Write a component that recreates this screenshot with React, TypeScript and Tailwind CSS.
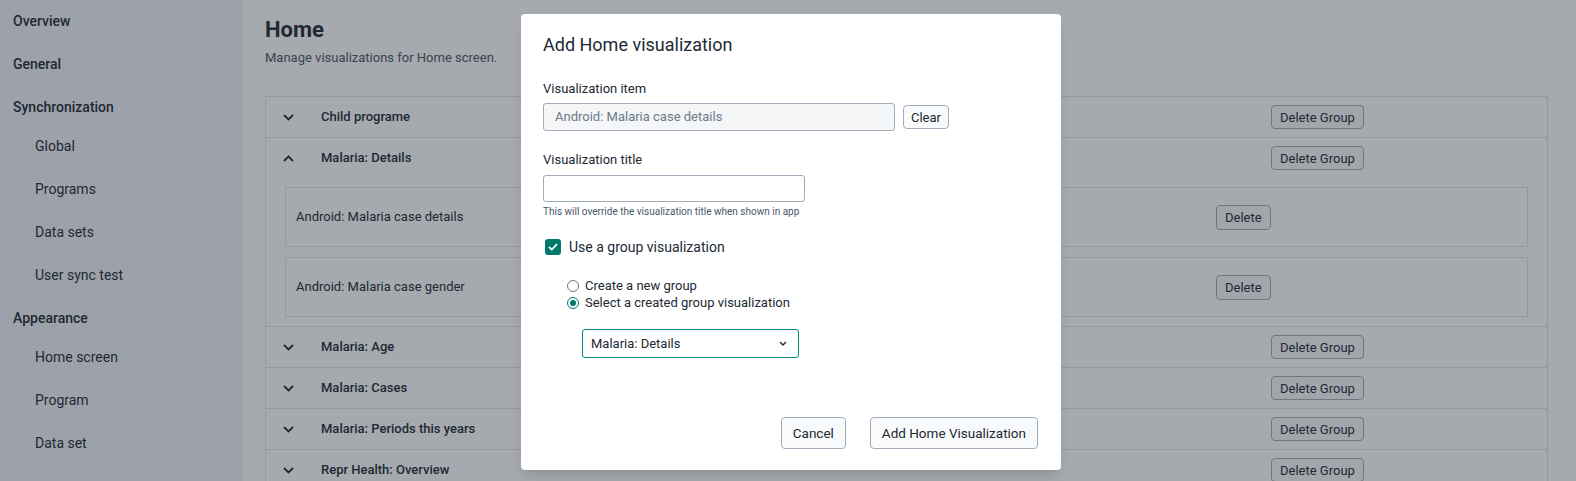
import React from "react"

interface Group {
  name: string
  open?: boolean
  items?: string[]
}

const groups: Group[] = [
  { name: "Child programe" },
  {
    name: "Malaria: Details",
    open: true,
    items: ["Android: Malaria case details", "Android: Malaria case gender"],
  },
  { name: "Malaria: Age" },
  { name: "Malaria: Cases" },
  { name: "Malaria: Periods this years" },
  { name: "Repr Health: Overview" },
]

const nav = [
  { label: "Overview", heading: true },
  { label: "General", heading: true },
  { label: "Synchronization", heading: true, parent: true },
  { label: "Global" },
  { label: "Programs" },
  { label: "Data sets" },
  { label: "User sync test" },
  { label: "Appearance", heading: true, parent: true },
  { label: "Home screen" },
  { label: "Program" },
  { label: "Data set" },
]

function Chevron({ up }: { up?: boolean }) {
  return (
    <svg width="11" height="7" viewBox="0 0 11 7" fill="none">
      <path
        d={up ? "M1 6L5.5 1.5L10 6" : "M1 1L5.5 5.5L10 1"}
        stroke="#212934"
        strokeWidth="1.8"
      />
    </svg>
  )
}

function Sidebar() {
  return (
    <aside className="w-[243px] shrink-0 bg-[#f1f4f8]">
      {nav.map((item) =>
        item.heading ? (
          <div
            key={item.label}
            className={
              item.parent
                ? "h-[39px] pt-[3px] flex items-center pl-[13px] text-[14px] font-medium text-[#212934]"
                : "h-[43px] flex items-center pl-[13px] text-[14px] font-medium text-[#212934]"
            }
          >
            {item.label}
          </div>
        ) : (
          <div
            key={item.label}
            className="h-[43px] flex items-center pl-[35px] text-[14px] text-[#212934]"
          >
            {item.label}
          </div>
        )
      )}
    </aside>
  )
}

function SmallButton({ children }: { children: React.ReactNode }) {
  return (
    <button className="h-[24px] px-[8px] rounded-[4px] border border-[#a0adba] bg-[#f9fafb] text-[13px] text-[#212934] leading-none">
      {children}
    </button>
  )
}

function MainContent() {
  return (
    <main className="flex-1 bg-white pl-[22px] pr-[28px] pt-[17px] overflow-hidden">
      <h1 className="text-[22px] leading-[26px] font-bold text-[#212934]">Home</h1>
      <p className="mt-[7px] text-[13px] leading-[16px] text-[#4a5768]">
        Manage visualizations for Home screen.
      </p>

      <div className="mt-[30px] border-l border-r border-[#e0e5ea]">
        {groups.map((group) => (
          <div key={group.name} className="border-t border-[#e0e5ea]">
            <div className="h-[40px] flex items-center">
              <div className="w-[55px] pl-[17px] flex items-center">
                <Chevron up={group.open} />
              </div>
              <div className="w-[950px] text-[13px] font-medium text-[#212934]">{group.name}</div>
              <SmallButton>Delete Group</SmallButton>
            </div>
            {group.open && group.items && (
              <div className="px-[19px] pt-[9px] pb-[9px] flex flex-col gap-[10px]">
                {group.items.map((it) => (
                  <div
                    key={it}
                    className="h-[60px] border border-[#e0e5ea] flex items-center pl-[10px]"
                  >
                    <div className="w-[920px] text-[13px] text-[#212934]">{it}</div>
                    <button className="h-[25px] px-[8px] rounded-[4px] border border-[#a0adba] bg-[#f9fafb] text-[13px] text-[#212934] leading-none">
                      Delete
                    </button>
                  </div>
                ))}
              </div>
            )}
          </div>
        ))}
      </div>
    </main>
  )
}

function Radio({ checked, label }: { checked?: boolean; label: string }) {
  return (
    <label className="h-[17px] flex items-center gap-[6px] text-[13px] text-[#212934]">
      <span
        className={
          checked
            ? "w-[12px] h-[12px] rounded-full border border-[#00796b] flex items-center justify-center"
            : "w-[12px] h-[12px] rounded-full border border-[#6e7a8a] flex items-center justify-center"
        }
      >
        {checked && <span className="w-[6px] h-[6px] rounded-full bg-[#00796b]" />}
      </span>
      {label}
    </label>
  )
}

function Modal() {
  return (
    <div className="w-[540px] h-[456px] bg-white rounded-[4px] flex flex-col pl-[22px] pr-[23px] pt-[19px] pb-[21px] shadow-lg">
      <h2 className="text-[18px] leading-[24px] text-[#212934]">Add Home visualization</h2>

      <div className="mt-[24px] text-[13px] leading-[16px] text-[#212934]">Visualization item</div>
      <div className="mt-[6px] flex items-center gap-[8px]">
        <div className="w-[352px] h-[28px] rounded-[3px] border border-[#a0adba] bg-[#f4f6f8] flex items-center pl-[11px] text-[13px] text-[#6e7a8a]">
          Android: Malaria case details
        </div>
        <button className="h-[24px] px-[7px] rounded-[4px] border border-[#a0adba] bg-[#f9fafb] text-[13px] text-[#212934] leading-none">
          Clear
        </button>
      </div>

      <div className="mt-[21px] text-[13px] leading-[16px] text-[#212934]">Visualization title</div>
      <div className="mt-[7px] w-[262px] h-[27px] rounded-[3px] border border-[#a0adba] bg-white" />
      <div className="mt-[4px] text-[10px] leading-[12px] text-[#4a5768]">
        This will override the visualization title when shown in app
      </div>

      <div className="mt-[20px] h-[18px] flex items-center gap-[8px] pl-[2px]">
        <span className="w-[16px] h-[16px] rounded-[3px] bg-[#00796b] flex items-center justify-center">
          <svg width="10" height="8" viewBox="0 0 10 8" fill="none">
            <path d="M1 4L3.8 6.6L9 1.2" stroke="white" strokeWidth="1.8" />
          </svg>
        </span>
        <span className="text-[14px] text-[#212934]">Use a group visualization</span>
      </div>

      <div className="mt-[21px] pl-[24px] flex flex-col">
        <Radio label="Create a new group" />
        <Radio checked label="Select a created group visualization" />
      </div>

      <div className="mt-[18px] ml-[39px] w-[217px] h-[29px] rounded-[3px] border border-[#00897b] flex items-center justify-between pl-[8px] pr-[11px] text-[13px] text-[#212934]">
        <span>Malaria: Details</span>
        <svg width="8" height="5" viewBox="0 0 8 5" fill="none">
          <path d="M1 1L4 4L7 1" stroke="#212934" strokeWidth="1.4" />
        </svg>
      </div>

      <div className="flex-1" />

      <div className="flex justify-end gap-[24px]">
        <button className="h-[32px] px-[11px] rounded-[4px] border border-[#a0adba] bg-[#f9fafb] text-[13.5px] text-[#212934]">
          Cancel
        </button>
        <button className="h-[32px] px-[11px] rounded-[4px] border border-[#a0adba] bg-[#f9fafb] text-[13.5px] text-[#212934]">
          Add Home Visualization
        </button>
      </div>
    </div>
  )
}

export default function App() {
  return (
    <div className="relative w-[1576px] h-[481px] overflow-hidden flex font-[Roboto,sans-serif]">
      <Sidebar />
      <MainContent />

      {/* dimmed backdrop + dialog */}
      <div className="absolute inset-0 bg-[rgba(33,41,52,0.4)] pl-[521px] pt-[14px]">
        <Modal />
      </div>
    </div>
  )
}
